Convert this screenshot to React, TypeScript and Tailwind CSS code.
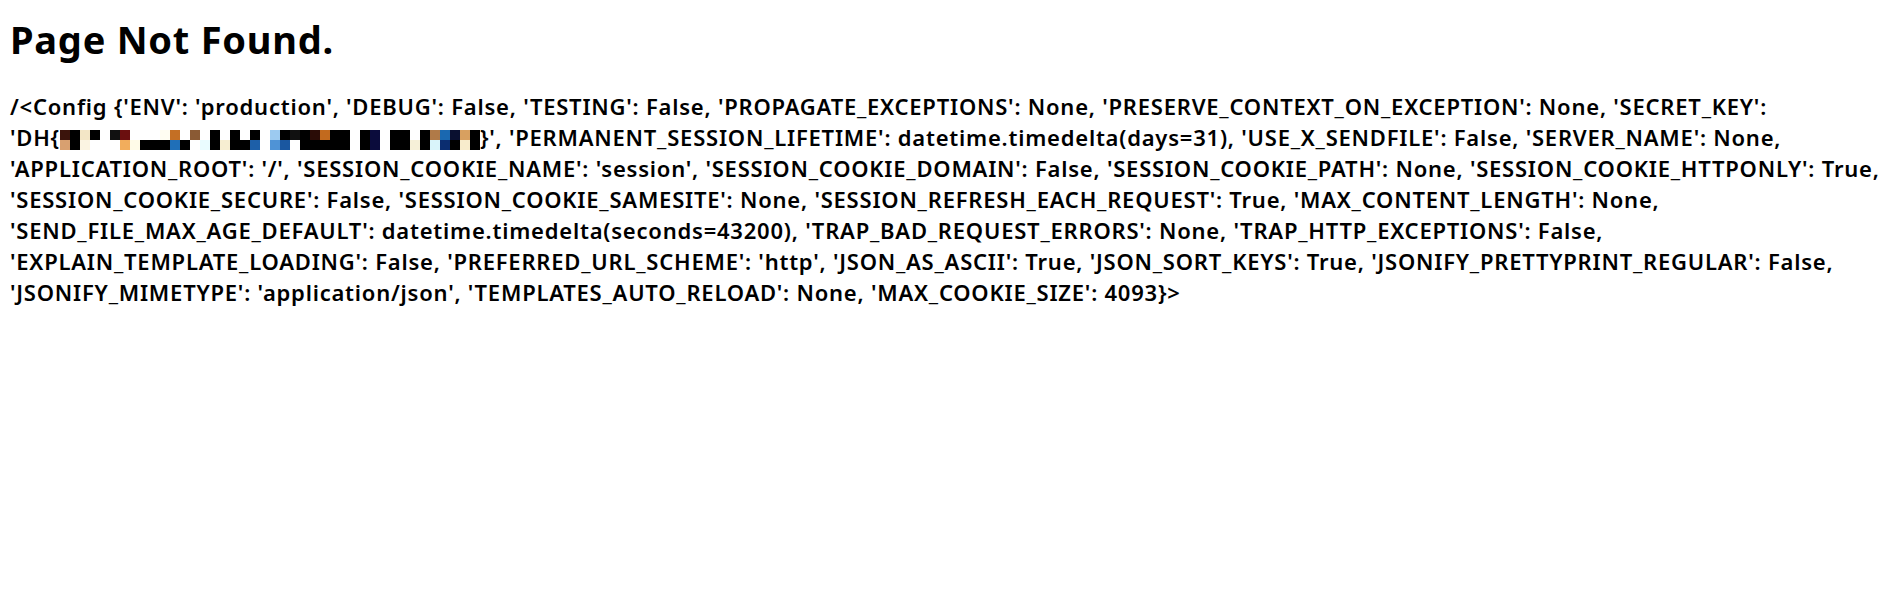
import React from 'react';

// [top, bottom] colour for each mosaic column of the redacted secret key
const KEY_CELLS: [string, string][] = [
  ['#3b140c', '#d8a070'], ['#000000', '#000000'], ['#f3e6c6', '#fbf4e2'], ['#000000', '#ffffff'],
  ['#ffffff', '#ffffff'], ['#111111', '#ffffff'], ['#6b0f0f', '#f2ad5c'], ['#ffffff', '#fffbe8'],
  ['#ffffff', '#000000'], ['#ffffff', '#000000'], ['#fffdf2', '#000000'], ['#c46f24', '#1f6fb8'],
  ['#ffffff', '#000000'], ['#8a5a34', '#ffffff'], ['#ffffff', '#eafcff'], ['#000000', '#000000'],
  ['#ffffff', '#f7eed2'], ['#000000', '#000000'], ['#ffffff', '#000000'], ['#000000', '#1d5fa8'],
  ['#ffffff', '#ffffff'], ['#9ccaf0', '#4f93d6'], ['#000000', '#1a57a0'], ['#111111', '#ffffff'],
  ['#000000', '#000000'], ['#2a0c06', '#000000'], ['#c26a1e', '#000000'], ['#000000', '#000000'],
  ['#000000', '#000000'], ['#ffffff', '#ffffff'], ['#000000', '#000000'], ['#0b0c3c', '#0b0c3c'],
  ['#ffffff', '#ffffff'], ['#000000', '#000000'], ['#000000', '#000000'], ['#ffffff', '#f6f0d8'],
  ['#000000', '#000000'], ['#b07a48', '#d9f4fa'], ['#1a68b0', '#0b2d70'], ['#0a1030', '#000000'],
  ['#d8a060', '#f8eccc'], ['#000000', '#000000'],
];

function KeyMosaic() {
  return (
    <span className="inline-block overflow-hidden align-[-4px] h-[20px]">
      <span className="flex h-[20px]">
        {KEY_CELLS.map(([top, bottom], i) => (
          <span key={i} className="flex flex-col w-[10px]">
            <span className="h-[10px]" style={{ backgroundColor: top }} />
            <span className="h-[10px]" style={{ backgroundColor: bottom }} />
          </span>
        ))}
      </span>
    </span>
  );
}

export default function App() {
  return (
    <div className="min-h-screen bg-white text-black px-[10px] pt-[15px] font-['Noto_Sans',sans-serif]">
      <h1 className="text-[38px] leading-[48px] font-bold tracking-[0.75px]">Page Not Found.</h1>
      <p className="mt-[28px] text-[22px] leading-[31px] font-semibold tracking-[0.78px] whitespace-nowrap">
        /&lt;Config {'{'}'ENV': 'production', 'DEBUG': False, 'TESTING': False, 'PROPAGATE_EXCEPTIONS': None, 'PRESERVE_CONTEXT_ON_EXCEPTION': None, 'SECRET_KEY':
        <br />
        'DH{'{'}<KeyMosaic />{'}'}', 'PERMANENT_SESSION_LIFETIME': datetime.timedelta(days=31), 'USE_X_SENDFILE': False, 'SERVER_NAME': None,
        <br />
        'APPLICATION_ROOT': '/', 'SESSION_COOKIE_NAME': 'session', 'SESSION_COOKIE_DOMAIN': False, 'SESSION_COOKIE_PATH': None, 'SESSION_COOKIE_HTTPONLY': True,
        <br />
        'SESSION_COOKIE_SECURE': False, 'SESSION_COOKIE_SAMESITE': None, 'SESSION_REFRESH_EACH_REQUEST': True, 'MAX_CONTENT_LENGTH': None,
        <br />
        'SEND_FILE_MAX_AGE_DEFAULT': datetime.timedelta(seconds=43200), 'TRAP_BAD_REQUEST_ERRORS': None, 'TRAP_HTTP_EXCEPTIONS': False,
        <br />
        'EXPLAIN_TEMPLATE_LOADING': False, 'PREFERRED_URL_SCHEME': 'http', 'JSON_AS_ASCII': True, 'JSON_SORT_KEYS': True, 'JSONIFY_PRETTYPRINT_REGULAR': False,
        <br />
        'JSONIFY_MIMETYPE': 'application/json', 'TEMPLATES_AUTO_RELOAD': None, 'MAX_COOKIE_SIZE': 4093{'}'}&gt;
      </p>
    </div>
  );
}
